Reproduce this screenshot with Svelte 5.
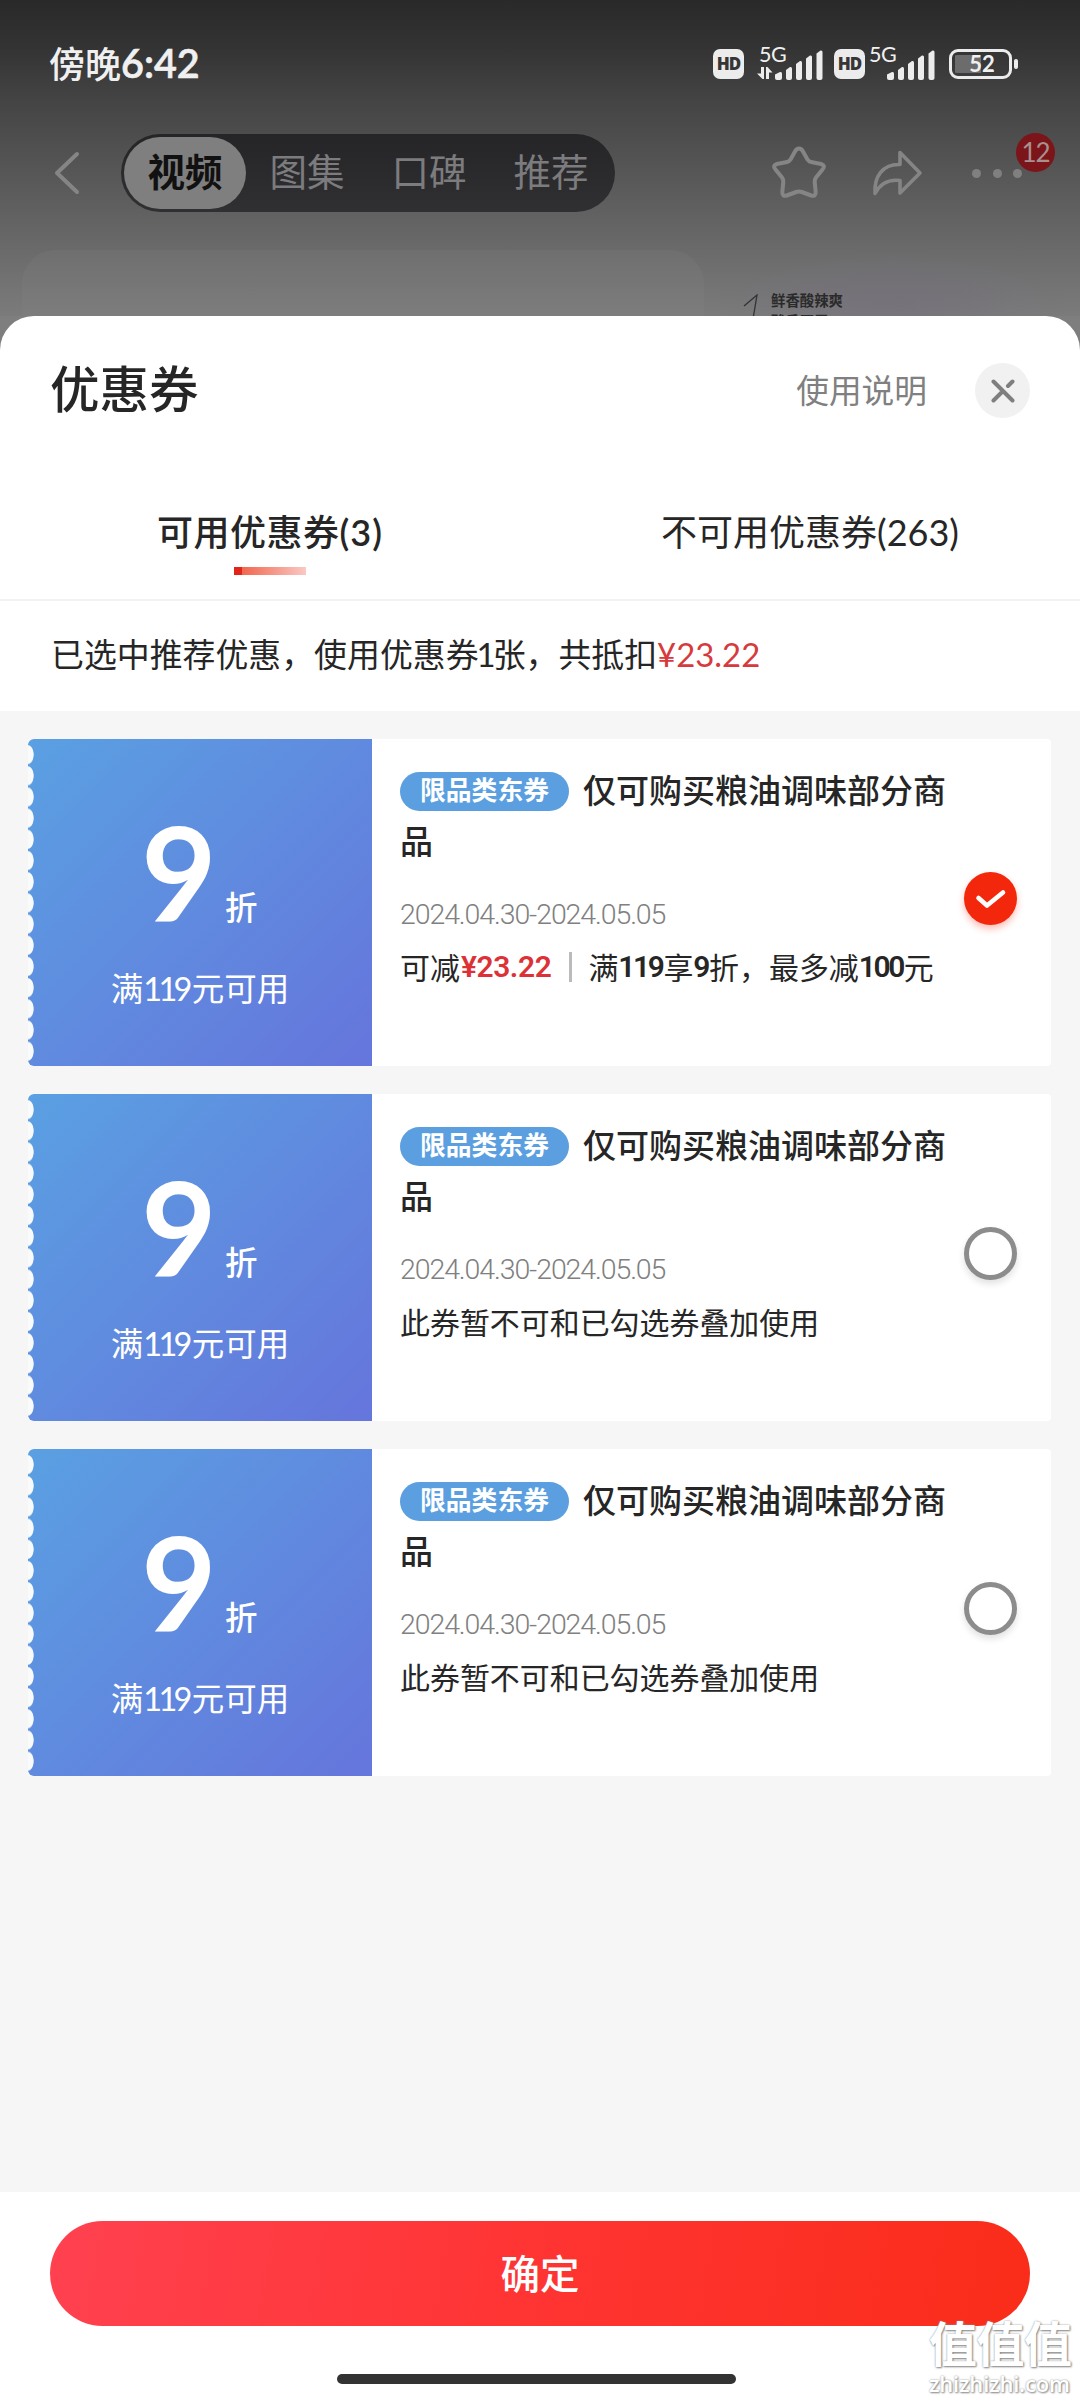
<script>
  const tabs = ['视频', '图集', '口碑', '推荐'];
  const title = '仅可购买粮油调味部分商品';
  const period = '2024.04.30-2024.05.05';

  let selected = $state(0);

  const coupons = [
    { saving: '¥23.22' },
    { note: '此券暂不可和已勾选券叠加使用' },
    { note: '此券暂不可和已勾选券叠加使用' }
  ];
</script>

{#snippet signal(arrows)}
  <div class="signal">
    <span class="net">5G</span>
    <svg width="66" height="34" viewBox="0 0 66 34" fill="#ececec">
      {#if arrows}
        <path d="M0 27.500h4v-6.500h3v12H5.500zM9 33V21h1.500l5 5.500h-3.500v6.500z" />
      {/if}
      <path d="M18 28.500l5-2.500q2-.5 2 1.500v4.500q0 2-2 2h-3q-2 0-2-2z" />
      <path d="M29 24l4-3q2-.5 2 1.500v9.500q0 2-2 2h-2q-2 0-2-2z" />
      <path d="M39 18l4-3q2-.5 2 1.500v15.500q0 2-2 2h-2q-2 0-2-2z" />
      <path d="M49 12.500l4-3q2-.5 2 1.500v21q0 2-2 2h-2q-2 0-2-2z" />
      <path d="M59.500 7.500l4-3q2-.5 2 1.500v26q0 2-2 2h-2q-2 0-2-2z" />
    </svg>
  </div>
{/snippet}

<div class="screen">
  <div class="page">
    <div class="status">
      <span class="time">傍晚<b>6:42</b></span>
      <div class="status-icons">
        <span class="hd">HD</span>
        {@render signal(true)}
        <span class="hd second">HD</span>
        {@render signal(false)}
        <div class="battery"><span>52</span></div>
      </div>
    </div>

    <div class="nav">
      <svg class="back" width="28" height="46" viewBox="0 0 28 46">
        <path d="M24 4L4 23l20 19" fill="none" stroke="#858585" stroke-width="4" stroke-linecap="round" stroke-linejoin="round" />
      </svg>
      <div class="pill">
        {#each tabs as tab, i}
          <span class:active={i === 0}>{tab}</span>
        {/each}
      </div>
      <svg class="star" width="58" height="58" viewBox="0 0 58 58">
        <path d="M29 4.500q2.500 0 4 3l4.500 8q1.200 2 3.500 2.500l10 2q5 1.500 1.500 5.500l-6.500 8q-1.500 2-1.300 4.500l1 10q0 5-4.500 3.500l-9.500-3.500q-2.700-1-5.400 0l-9.500 3.500q-4.500 1.500-4.500-3.500l1-10q.2-2.500-1.300-4.500l-6.500-8q-3.500-4 1.500-5.500l10-2q2.300-.5 3.500-2.500l4.500-8q1.500-3 4-3z" fill="none" stroke="#858585" stroke-width="4" stroke-linejoin="round" />
      </svg>
      <svg class="share" width="54" height="50" viewBox="0 0 54 50">
        <path d="M29 4.500l20 20.500-20 20V32.500C17 31 9 36 4 45.500 3 29 11 16 29 16.500z" fill="none" stroke="#858585" stroke-width="3.600" stroke-linejoin="round" />
      </svg>
      <div class="more">
        <i></i><i></i><i></i>
        <span class="badge">12</span>
      </div>
    </div>

    <div class="goods">
      <div class="goods-main"></div>
      <div class="goods-side">
        <svg width="18" height="32" viewBox="0 0 18 32">
          <path d="M2 12L15 1 10 31" fill="none" stroke="#333" stroke-width="1.300" />
        </svg>
        <div>鲜香酸辣爽<br />酸香开胃</div>
      </div>
    </div>
  </div>

  <div class="sheet">
    <div class="sheet-head">
      <h1>优惠券</h1>
      <span class="help">使用说明</span>
      <button class="close" aria-label="关闭">
        <svg width="24" height="24" viewBox="0 0 24 24">
          <path d="M2.500 2.500l19 19M2.500 21.500l9.500-9.500M17 7l4.500-4.500" stroke="#7f7f7f" stroke-width="4" stroke-linecap="round" />
        </svg>
      </button>
    </div>

    <div class="tabs">
      <div class="tab current">可用优惠券<span>(3)</span></div>
      <div class="tab">不可用优惠券<span>(263)</span></div>
    </div>

    <div class="summary">已选中推荐优惠，使用优惠券<span>1</span>张，共抵扣<em>¥23.22</em></div>

    <div class="list">
      {#each coupons as coupon, i}
        <div class="coupon">
          <div class="face">
            <div class="rate"><b>9</b><span>折</span></div>
            <div class="limit">满<span>119</span>元可用</div>
          </div>
          <div class="info">
            <div class="title"><span class="tag">限品类东券</span>{title}</div>
            <div class="period">{period}</div>
            <div class="note">
              {#if coupon.saving}
                可减<em>{coupon.saving}</em><i></i>满<b>119</b>享<b>9</b>折，最多减<b>100</b>元
              {:else}
                {coupon.note}
              {/if}
            </div>
          </div>
          <button class="radio" class:checked={selected === i} aria-label="选择" onclick={() => (selected = i)}>
            {#if selected === i}
              <svg width="32" height="22" viewBox="0 0 32 22">
                <path d="M3.500 10l8.500 7.500L28 4.500" fill="none" stroke="#fff" stroke-width="4.600" stroke-linecap="round" stroke-linejoin="round" />
              </svg>
            {/if}
          </button>
        </div>
      {/each}
    </div>

    <div class="footer">
      <button class="confirm">确定</button>
      <div class="home"></div>
    </div>
  </div>

  <div class="watermark">
    <strong>值值值</strong>
    <span>zhizhizhi.com</span>
  </div>
</div>

<style>
  :global(body) {
    margin: 0;
  }

  .screen {
    position: relative;
    width: 1080px;
    height: 2400px;
    overflow: hidden;
    display: flex;
    flex-direction: column;
    background: #7e7e7e;
    color: #262626;
    font-family: Lato, "Noto Sans CJK SC", sans-serif;
  }

  button {
    border: none;
    padding: 0;
    font-family: inherit;
  }

  em, i {
    font-style: normal;
  }

  .page {
    height: 316px;
    flex: none;
    background: linear-gradient(#292929 0, #343434 50px, #444 100px, #606060 210px, #727272 280px, #7b7b7b 316px);
  }

  .status {
    height: 128px;
    display: flex;
    justify-content: space-between;
    box-sizing: border-box;
    padding: 42px 68px 0 49px;
    color: #f0f0f0;
  }

  .time {
    font-size: 36px;
    line-height: 42px;
    font-weight: 500;
  }

  .time b {
    font-size: 39.500px;
    font-weight: 600;
    -webkit-text-stroke: 0.6px #f0f0f0;
  }

  .status-icons {
    display: flex;
    align-items: flex-start;
    padding-top: 4px;
  }

  .hd {
    width: 31px;
    height: 30px;
    margin-top: 3px;
    border-radius: 7px;
    background: #ececec;
    color: #363636;
    font: 800 17px/30px "Open Sans", sans-serif;
    text-align: center;
    letter-spacing: -1px;
  }

  .hd.second {
    margin-left: 11px;
  }

  .signal {
    position: relative;
    width: 66px;
    height: 34px;
    margin-left: 13px;
  }

  .hd.second + .signal {
    margin-left: 4px;
  }

  .net {
    position: absolute;
    left: 2px;
    top: 0;
    font-size: 21.500px;
    line-height: 17px;
    letter-spacing: -0.500px;
  }

  .hd.second + .signal .net {
    left: 0;
  }

  .signal svg {
    display: block;
  }

  .battery {
    position: relative;
    box-sizing: border-box;
    width: 63px;
    height: 30px;
    margin: 3px 0 0 14px;
    border: 3px solid #ececec;
    border-radius: 9px;
    font-size: 22px;
    line-height: 24px;
    font-weight: 700;
    text-align: center;
    background: linear-gradient(90deg, transparent 3px, #6c6c6c 3px, #6c6c6c 29px, transparent 29px) content-box;
    padding: 3px 0;
  }

  .battery span {
    display: block;
    margin-top: -3px;
    padding-left: 3px;
  }

  .battery::after {
    content: "";
    position: absolute;
    right: -9px;
    top: 7px;
    width: 4px;
    height: 10px;
    border-radius: 2px;
    background: #ececec;
  }

  .nav {
    height: 90px;
    display: flex;
    align-items: center;
  }

  .back {
    margin-left: 53px;
  }

  .pill {
    box-sizing: border-box;
    width: 494px;
    height: 78px;
    margin-left: 40px;
    padding: 3px;
    border-radius: 39px;
    background: linear-gradient(#252528, #303033);
    display: flex;
    color: #7c7c7e;
    font-size: 37.500px;
    line-height: 70px;
  }

  .pill span {
    width: 122px;
    text-align: center;
  }

  .pill .active {
    border-radius: 36px;
    background: #7f7f7f;
    color: #111;
    font-weight: 700;
  }

  .star {
    margin-left: 155px;
  }

  .share {
    margin-left: 43px;
  }

  .more {
    position: relative;
    z-index: 1;
    display: flex;
    gap: 11.500px;
    margin-left: 47px;
  }

  .more i {
    width: 9px;
    height: 9px;
    border-radius: 50%;
    background: #808080;
  }

  .badge {
    position: absolute;
    left: 44px;
    top: -36px;
    width: 39px;
    height: 39px;
    border-radius: 50%;
    background: #7c1519;
    color: #a8908f;
    font-size: 26px;
    line-height: 38px;
    text-align: center;
    letter-spacing: -1px;
    z-index: -1;
  }

  .goods {
    height: 66px;
    margin-top: 32px;
    padding-left: 22px;
    display: flex;
    gap: 14px;
  }

  .goods-main {
    width: 682px;
    border-radius: 34px 34px 0 0;
    background: linear-gradient(rgba(255, 255, 255, 0.03), rgba(255, 255, 255, 0.015));
  }

  .goods-side {
    width: 350px;
    display: flex;
    overflow: hidden;
    background: radial-gradient(ellipse at 50% 80%, rgba(115, 108, 125, 0.5), transparent 72%);
    color: #2a2a2a;
    font-size: 14.400px;
    font-weight: 700;
    line-height: 21px;
  }

  .goods-side svg {
    margin: 44px 11px 0 24px;
    flex: none;
  }

  .goods-side div {
    padding-top: 40px;
  }

  .sheet {
    position: relative;
    flex: 1;
    display: flex;
    flex-direction: column;
    border-radius: 34px 34px 0 0;
    background: #fff;
    overflow: hidden;
  }

  .sheet-head {
    height: 149px;
    display: flex;
    align-items: center;
    padding: 0 50px;
  }

  h1 {
    flex: 1;
    margin: -4px 0 0;
    font-size: 49.500px;
    line-height: 60px;
    font-weight: 500;
  }

  .help {
    margin: -5px 48px 0 0;
    color: #808080;
    font-size: 32.700px;
  }

  .close {
    width: 55px;
    height: 55px;
    border-radius: 50%;
    background: #f1f1f1;
    display: grid;
    place-items: center;
  }

  .tabs {
    box-sizing: border-box;
    height: 136px;
    display: flex;
    padding-top: 43px;
    border-bottom: 2px solid #f2f2f2;
    font-size: 36px;
    line-height: 48px;
  }

  .tab {
    position: relative;
    width: 540px;
    text-align: center;
  }

  .tab.current {
    font-weight: 500;
    letter-spacing: 0.500px;
  }

  .tab.current span {
    font-weight: 600;
    letter-spacing: 1px;
  }

  .tab.current::after {
    content: "";
    position: absolute;
    left: 234px;
    top: 59px;
    width: 72px;
    height: 8px;
    background: linear-gradient(90deg, #e1251b 8px, #f2664f 8px, #f9c9c4);
  }

  .summary {
    height: 110px;
    padding-left: 51px;
    font-size: 32.900px;
    line-height: 108px;
    white-space: nowrap;
  }

  .summary span {
    margin: 0 -3px 0 -2px;
  }

  .summary em {
    color: #d73a3c;
  }

  .list {
    flex: 1;
    display: flex;
    flex-direction: column;
    gap: 28px;
    padding: 28px 29px 0 28px;
    background: #f6f6f6;
  }

  .coupon {
    height: 327px;
    display: flex;
    background: #fff;
    border-radius: 4px;
  }

  .face {
    position: relative;
    width: 344px;
    border-radius: 6px 0 0 6px;
    background: linear-gradient(135deg, #5aa0e2, #6577dc 95%);
    color: #fff;
    text-align: center;
  }

  .face::before {
    content: "";
    position: absolute;
    left: 0;
    top: 5px;
    width: 7px;
    height: 318px;
    background: radial-gradient(ellipse 6px 10px at 0 50%, #f9fbfb 88%, transparent) 0 0 / 7px 21.200px repeat-y;
  }

  .rate {
    display: flex;
    align-items: baseline;
    height: 186px;
    padding: 55px 0 0 113px;
    box-sizing: border-box;
  }

  .rate b {
    width: 76px;
    font-size: 130px;
    line-height: 156px;
    font-weight: 700;
  }

  .rate span {
    position: relative;
    top: -2px;
    margin-left: 8px;
    font-size: 32.500px;
    font-weight: 500;
  }

  .limit {
    height: 60px;
    margin-top: 34px;
    font-size: 32.500px;
    line-height: 60px;
  }

  .limit span {
    margin-right: 3px;
    letter-spacing: -3.700px;
  }

  .info {
    width: 570px;
    padding: 26px 0 0 28px;
  }

  .title {
    font-size: 33px;
    line-height: 51px;
    font-weight: 500;
  }

  .tag {
    display: inline-block;
    width: 169px;
    height: 39px;
    margin-right: 14px;
    border-radius: 20px;
    background: #5b9fe0;
    color: #fff;
    font-size: 25.800px;
    line-height: 37px;
    font-weight: 700;
    text-align: center;
    vertical-align: 3px;
  }

  .period {
    margin-top: 28px;
    color: #808080;
    font: 300 28.500px/40px Roboto, sans-serif;
    letter-spacing: -1.100px;
  }

  .note {
    display: flex;
    align-items: center;
    margin-top: 8px;
    font-size: 29.950px;
    line-height: 48px;
    white-space: nowrap;
  }

  .note em, .note b {
    font-family: Roboto, sans-serif;
    font-weight: 600;
    letter-spacing: -2.400px;
  }

  .note b {
    margin: 0 1px 0 0;
  }

  .note em {
    margin-left: 1px;
    color: #dc3237;
    letter-spacing: -0.400px;
  }

  .note i {
    width: 3px;
    height: 30px;
    margin: 0 16px 0 18px;
    background: #bbb;
  }

  .radio {
    align-self: center;
    box-sizing: border-box;
    width: 53px;
    height: 53px;
    margin: 0 0 8px -6px;
    border: 5px solid #8c8c8c;
    border-radius: 50%;
    background: #fff;
    box-shadow: 0 4px 7px rgba(0, 0, 0, 0.12);
    display: grid;
    place-items: center;
  }

  .radio.checked {
    border: none;
    background: #f2270c;
    box-shadow: 0 4px 7px rgba(242, 39, 12, 0.3);
  }

  .footer {
    height: 208px;
    display: flex;
    flex-direction: column;
    align-items: center;
    background: #fff;
  }

  .confirm {
    width: 980px;
    height: 105px;
    margin-top: 29px;
    border-radius: 53px;
    background: linear-gradient(100deg, #ff4150, #ff3535 45%, #fa2c19);
    color: #fff;
    font-size: 39.500px;
    line-height: 100px;
    font-weight: 500;
  }

  .home {
    width: 399px;
    height: 10px;
    margin: 48px 7px 0 0;
    border-radius: 5px;
    background: #333;
  }

  .watermark {
    position: absolute;
    left: 929px;
    top: 2317px;
    width: 146px;
    color: #fff;
    text-shadow: 1px 1px 2px #888, 0 0 2px #999;
  }

  .watermark strong {
    display: block;
    font-size: 48px;
    line-height: 54px;
    font-weight: 700;
    letter-spacing: -0.500px;
  }

  .watermark span {
    display: block;
    font: 600 22px/24px "Open Sans", sans-serif;
    letter-spacing: -0.200px;
  }
</style>
